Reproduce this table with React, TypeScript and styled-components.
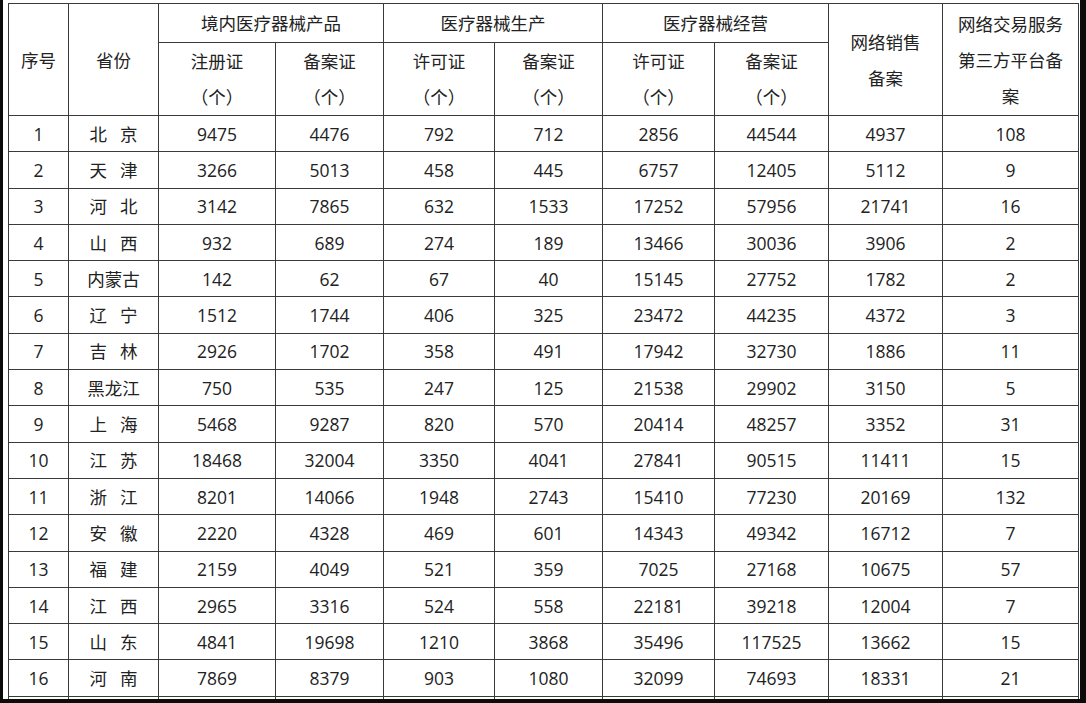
import styled, { createGlobalStyle } from 'styled-components';

const GlobalStyle = createGlobalStyle`
    html, body {
        margin: 0;
        padding: 0;
        background: #0b0b0b;
    }
    body {
        font-family: "Open Sans", "Noto Sans CJK SC", sans-serif;
        color: #222;
    }
`;

type Row = [string, number, number, number, number, number, number, number, number];

const rows: Row[] = [
    ['北 京', 9475, 4476, 792, 712, 2856, 44544, 4937, 108],
    ['天 津', 3266, 5013, 458, 445, 6757, 12405, 5112, 9],
    ['河 北', 3142, 7865, 632, 1533, 17252, 57956, 21741, 16],
    ['山 西', 932, 689, 274, 189, 13466, 30036, 3906, 2],
    ['内蒙古', 142, 62, 67, 40, 15145, 27752, 1782, 2],
    ['辽 宁', 1512, 1744, 406, 325, 23472, 44235, 4372, 3],
    ['吉 林', 2926, 1702, 358, 491, 17942, 32730, 1886, 11],
    ['黑龙江', 750, 535, 247, 125, 21538, 29902, 3150, 5],
    ['上 海', 5468, 9287, 820, 570, 20414, 48257, 3352, 31],
    ['江 苏', 18468, 32004, 3350, 4041, 27841, 90515, 11411, 15],
    ['浙 江', 8201, 14066, 1948, 2743, 15410, 77230, 20169, 132],
    ['安 徽', 2220, 4328, 469, 601, 14343, 49342, 16712, 7],
    ['福 建', 2159, 4049, 521, 359, 7025, 27168, 10675, 57],
    ['江 西', 2965, 3316, 524, 558, 22181, 39218, 12004, 7],
    ['山 东', 4841, 19698, 1210, 3868, 35496, 117525, 13662, 15],
    ['河 南', 7869, 8379, 903, 1080, 32099, 74693, 18331, 21],
];

const colWidths = [60, 90, 117, 108, 111, 108, 112, 114, 114, 136];

const App = () => {
    return (
        <>
            <GlobalStyle />
            <Frame>
                <Table>
                    <colgroup>
                        {colWidths.map((w, i) => (
                            <col key={i} style={{ width: w }} />
                        ))}
                    </colgroup>
                    <thead>
                        <TopHeadRow>
                            <HeadCell rowSpan={2}>序号</HeadCell>
                            <HeadCell rowSpan={2}>省份</HeadCell>
                            <HeadCell colSpan={2}>境内医疗器械产品</HeadCell>
                            <HeadCell colSpan={2}>医疗器械生产</HeadCell>
                            <HeadCell colSpan={2}>医疗器械经营</HeadCell>
                            <HeadCell rowSpan={2}>
                                网络销售
                                <br />
                                备案
                            </HeadCell>
                            <HeadCell rowSpan={2}>
                                网络交易服务
                                <br />
                                第三方平台备
                                <br />案
                            </HeadCell>
                        </TopHeadRow>
                        <SubHeadRow>
                            {['注册证', '备案证', '许可证', '备案证', '许可证', '备案证'].map((t, i) => (
                                <HeadCell key={i}>
                                    {t}
                                    <br />
                                    （个）
                                </HeadCell>
                            ))}
                        </SubHeadRow>
                    </thead>
                    <tbody>
                        {rows.map(([name, ...nums], i) => (
                            <BodyRow key={i}>
                                <Cell>{i + 1}</Cell>
                                <Cell $spaced>{name}</Cell>
                                {nums.map((n, j) => (
                                    <Cell key={j}>{n}</Cell>
                                ))}
                            </BodyRow>
                        ))}
                        {/* next row, cut off by the frame */}
                        <BodyRow>
                            {colWidths.map((_, j) => (
                                <Cell key={j} />
                            ))}
                        </BodyRow>
                    </tbody>
                </Table>
            </Frame>
        </>
    );
};

export default App;

const Frame = styled.div`
    margin-left: 3px;
    width: 1077px;
    height: 699px;
    background: #fff;
    overflow: hidden;
    padding: 3px 0 0 5px;
    box-sizing: border-box;
`;

const Table = styled.table`
    border-collapse: collapse;
    table-layout: fixed;
    width: 1070px;
    font-size: 17.5px;
    color: #222;
    text-align: center;
    th,
    td {
        border: 1px solid #3a3a3a;
        padding: 0;
    }
`;

const TopHeadRow = styled.tr`
    height: 39px;
`;

const SubHeadRow = styled.tr`
    height: 72px;
`;

const HeadCell = styled.th`
    font-weight: 400;
    line-height: 36px;
    font-family: "Noto Sans CJK SC", sans-serif;
    vertical-align: middle;
`;

const BodyRow = styled.tr`
    height: 36.3px;
`;

const Cell = styled.td<{ $spaced?: boolean }>`
    line-height: 20px;
    vertical-align: middle;
    font-family: ${(p) => (p.$spaced ? '"Noto Sans CJK SC", sans-serif' : '"Open Sans", "Noto Sans CJK SC", sans-serif')};
    word-spacing: ${(p) => (p.$spaced ? '9px' : '0')};
    white-space: pre;
`;
